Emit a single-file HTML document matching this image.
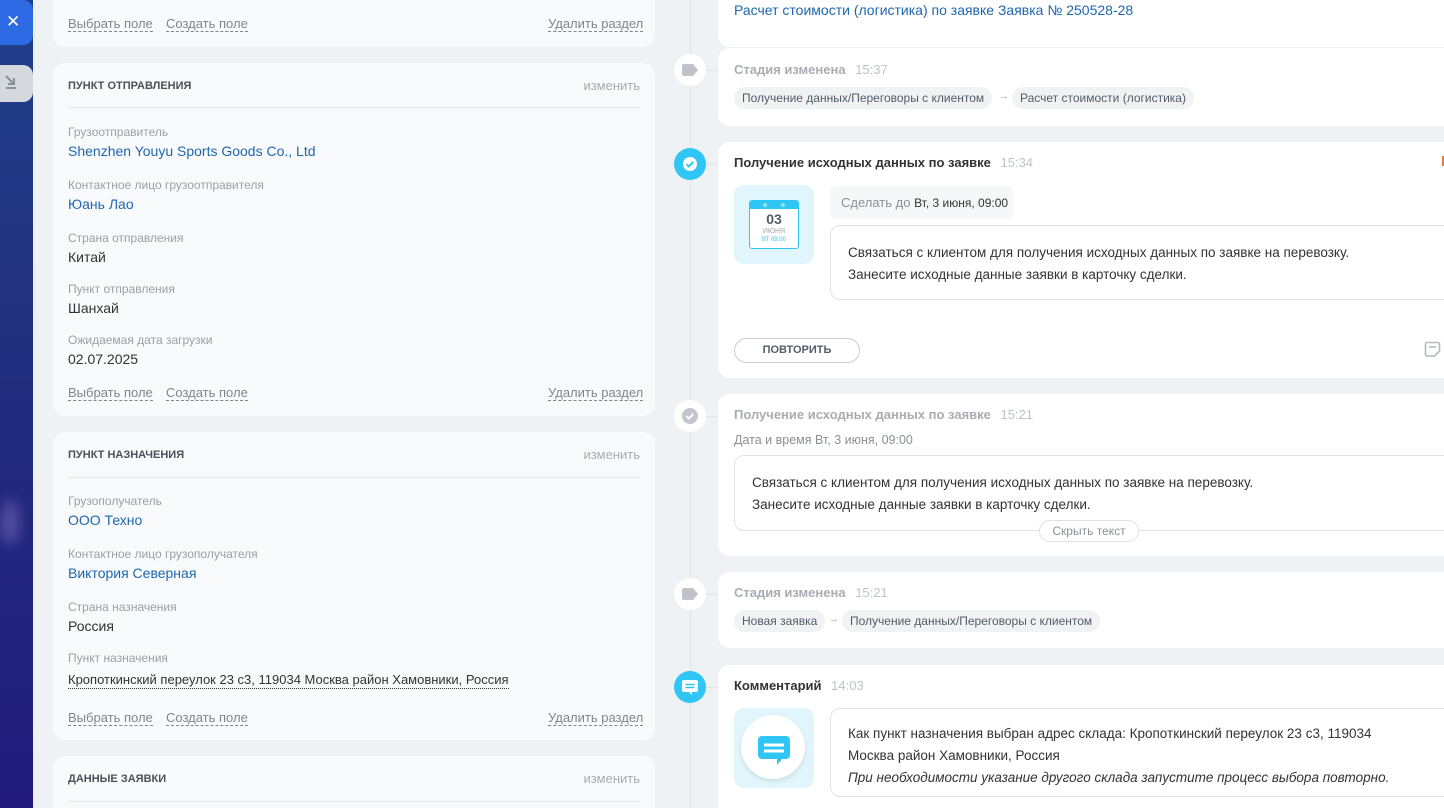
<!DOCTYPE html>
<html style="overflow:hidden;width:1444px;height:808px"><head><meta charset="utf-8"><style>
*{margin:0;padding:0;box-sizing:border-box}
body{width:1444px;height:808px;overflow:hidden;background:#eef2f4;font-family:"Liberation Sans",sans-serif;position:relative;color:#333}
.a{position:absolute;white-space:nowrap}
.side{position:absolute;left:0;top:0;width:33px;height:808px;background:linear-gradient(180deg,#1f3f8a 0%,#22307f 40%,#211a7c 100%)}
.lc{position:absolute;left:53px;width:602px;background:#f8fafb;border-radius:12px}
.rc{position:absolute;left:718px;width:726px;background:#fff;border-radius:12px 0 0 12px;overflow:hidden}
.lbl{font-size:12px;color:#9aa0a6}
.val{font-size:14px;color:#333}
.blue{color:#2067b0}
.ttl{font-size:11px;font-weight:bold;color:#4a5158;text-transform:uppercase}
.chg{font-size:13px;color:#a8adb2}
.hr{position:absolute;left:15px;right:15px;height:1px;background:#e3e6e9}
.lk{font-size:13px;color:#80868e;border-bottom:1px dashed #80868e;line-height:14px}
.dot{position:absolute;left:674px;width:32px;height:32px;border-radius:50%;background:#fff}
.dot.b{background:#2fc6f6}
.conn{position:absolute;left:706px;width:12px;height:1px;background:#dfe3e6}
.h{font-size:13px;font-weight:bold;color:#333}
.hg{font-size:13px;font-weight:bold;color:#a8adb2}
.tm{font-size:13px;color:#bfc3c7}
.pill{position:absolute;height:22px;line-height:22px;padding:0 8px;background:#f1f2f3;border-radius:11px;font-size:12px;color:#525c69}
.box{position:absolute;border:1px solid #dfe2e5;border-radius:10px;background:#fff}
.tx{font-size:13.5px;color:#333;line-height:22px}
</style></head><body>
<div class="side"></div>
<div class="a" style="left:0;top:0;width:33px;height:45px;background:#2f6ae5;border-radius:0 10px 10px 0"></div>
<div class="a" style="left:6px;top:12px;color:#fff;font-size:17px">✕</div>
<div class="a" style="left:0;top:65px;width:33px;height:37px;background:#d5d9dd;border-radius:0 10px 10px 0"></div>
<svg class="a" style="left:4px;top:74px" width="14" height="16" viewBox="0 0 14 16"><path d="M2 2l8 8M10 4v6H4M2 14h10" stroke="#8a9096" stroke-width="2" fill="none"/></svg>
<div class="a" style="left:0;top:500px;width:20px;height:45px;border-radius:50%;background:rgba(140,120,200,.45);filter:blur(6px)"></div>

<div class="a" style="left:690px;top:0;width:1px;height:808px;background:#dfe3e6"></div>

<div class="lc" style="top:-20px;height:67px">
 <span class="a lk" style="left:15px;top:37px">Выбрать поле</span>
 <span class="a lk" style="left:113px;top:37px">Создать поле</span>
 <span class="a lk" style="left:495px;top:37px">Удалить раздел</span>
</div>
<div class="lc" style="top:63px;height:353px">
 <div class="a ttl" style="left:15px;top:17px">Пункт отправления</div>
 <div class="a chg" style="right:15px;top:15px">изменить</div>
 <div class="hr" style="top:44px"></div>
 <div class="a lbl" style="left:15px;top:62px">Грузоотправитель</div>
 <div class="a val blue" style="left:15px;top:80px">Shenzhen Youyu Sports Goods Co., Ltd</div>
 <div class="a lbl" style="left:15px;top:115px">Контактное лицо грузоотправителя</div>
 <div class="a val blue" style="left:15px;top:133px">Юань Лао</div>
 <div class="a lbl" style="left:15px;top:168px">Страна отправления</div>
 <div class="a val" style="left:15px;top:186px">Китай</div>
 <div class="a lbl" style="left:15px;top:219px">Пункт отправления</div>
 <div class="a val" style="left:15px;top:237px">Шанхай</div>
 <div class="a lbl" style="left:15px;top:270px">Ожидаемая дата загрузки</div>
 <div class="a val" style="left:15px;top:288px">02.07.2025</div>
 <span class="a lk" style="left:15px;top:323px">Выбрать поле</span>
 <span class="a lk" style="left:113px;top:323px">Создать поле</span>
 <span class="a lk" style="left:495px;top:323px">Удалить раздел</span>
</div>
<div class="lc" style="top:432px;height:308px">
 <div class="a ttl" style="left:15px;top:17px">Пункт назначения</div>
 <div class="a chg" style="right:15px;top:15px">изменить</div>
 <div class="hr" style="top:45px"></div>
 <div class="a lbl" style="left:15px;top:62px">Грузополучатель</div>
 <div class="a val blue" style="left:15px;top:80px">ООО Техно</div>
 <div class="a lbl" style="left:15px;top:115px">Контактное лицо грузополучателя</div>
 <div class="a val blue" style="left:15px;top:133px">Виктория Северная</div>
 <div class="a lbl" style="left:15px;top:168px">Страна назначения</div>
 <div class="a val" style="left:15px;top:186px">Россия</div>
 <div class="a lbl" style="left:15px;top:219px">Пункт назначения</div>
 <div class="a" style="left:15px;top:240px;font-size:13px;color:#333;border-bottom:1px dotted #333;line-height:16px">Кропоткинский переулок 23 с3, 119034 Москва район Хамовники, Россия</div>
 <span class="a lk" style="left:15px;top:279px">Выбрать поле</span>
 <span class="a lk" style="left:113px;top:279px">Создать поле</span>
 <span class="a lk" style="left:495px;top:279px">Удалить раздел</span>
</div>
<div class="lc" style="top:756px;height:52px;border-radius:12px 12px 0 0">
 <div class="a ttl" style="left:15px;top:17px">Данные заявки</div>
 <div class="a chg" style="right:15px;top:15px">изменить</div>
 <div class="hr" style="top:45px"></div>
</div>

<div class="rc" style="top:-20px;height:67px">
 <div class="a blue" style="left:16px;top:22px;font-size:14px">Расчет стоимости (логистика) по заявке Заявка № 250528-28</div>
</div>

<div class="dot" style="top:54px"></div><div class="conn" style="top:70px"></div>
<svg class="a" style="left:682px;top:64px" width="17" height="12"><path d="M2 0h9l5 6-5 6H2a2 2 0 0 1-2-2V2a2 2 0 0 1 2-2z" fill="#bfc3c8"/></svg>
<div class="rc" style="top:48px;height:78px">
 <div class="a hg" style="left:16px;top:14px">Стадия изменена <span class="tm" style="font-weight:normal;margin-left:6px">15:37</span></div>
 <div class="pill" style="left:16px;top:39px">Получение данных/Переговоры с клиентом</div>
 <div class="a" style="left:280px;top:42px;font-size:11px;color:#aaa">→</div>
 <div class="pill" style="left:294px;top:39px">Расчет стоимости (логистика)</div>
</div>

<div class="dot b" style="top:148px"></div><div class="conn" style="top:164px"></div>
<svg class="a" style="left:682px;top:156px" width="16" height="16"><circle cx="8" cy="8" r="7" fill="#fff"/><path d="M4.5 8.3l2.3 2.2 4.5-4.5" stroke="#2fc6f6" stroke-width="2" fill="none"/></svg>
<div class="rc" style="top:142px;height:236px">
 <div class="a h" style="left:16px;top:13px">Получение исходных данных по заявке <span class="tm" style="font-weight:normal;margin-left:6px">15:34</span></div>
 <div class="a" style="left:16px;top:43px;width:80px;height:79px;background:#e0f6fc;border-radius:10px"></div>
 <div class="a" style="left:31px;top:58px;width:50px;height:49px;background:#fff;border:1px solid #2fc6f6;border-radius:3px;overflow:hidden">
  <div style="height:8px;background:#2fc6f6;position:relative"><span style="position:absolute;left:13px;top:2px;width:4px;height:4px;border-radius:50%;background:#8ee3fb"></span><span style="position:absolute;left:31px;top:2px;width:4px;height:4px;border-radius:50%;background:#8ee3fb"></span></div>
  <div style="text-align:center;font-size:14px;font-weight:bold;color:#535c69;line-height:16px;margin-top:2px">03</div>
  <div style="text-align:center;font-size:7px;color:#a0a6ac;line-height:9px">ИЮНЯ</div>
  <div style="text-align:center;font-size:6px;color:#2fc6f6;line-height:8px">ВТ 09:00</div>
 </div>
 <div class="a" style="left:112px;top:44px;width:183px;height:33px;background:#f5f7f8;border-radius:6px"></div>
 <div class="a" style="left:123px;top:53px;font-size:13px;color:#8a9096">Сделать до <span style="color:#333;font-size:12px">Вт, 3 июня, 09:00</span></div>
 <div class="box" style="left:112px;top:83px;width:640px;height:75px"></div>
 <div class="a tx" style="left:130px;top:100px">Связаться с клиентом для получения исходных данных по заявке на перевозку.<br>Занесите исходные данные заявки в карточку сделки.</div>
 <div class="a" style="left:16px;top:196px;width:126px;height:25px;border:1px solid #c9ccd0;border-radius:13px;text-align:center;line-height:23px;font-size:11px;font-weight:bold;color:#535c69">ПОВТОРИТЬ</div>
 <svg class="a" style="left:706px;top:199px" width="17" height="17"><path d="M3 1.5h11a1.5 1.5 0 0 1 1.5 1.5v7l-5 5H3A1.5 1.5 0 0 1 1.5 13.5V3A1.5 1.5 0 0 1 3 1.5z" fill="none" stroke="#b5b9bd" stroke-width="1.6"/><path d="M5 6h7" stroke="#b5b9bd" stroke-width="1.6"/></svg>
 <div class="a" style="left:724px;top:14px;width:4px;height:10px;background:#e87b3a"></div>
</div>

<div class="dot" style="top:400px"></div><div class="conn" style="top:416px"></div>
<svg class="a" style="left:682px;top:408px" width="16" height="16"><circle cx="8" cy="8" r="8" fill="#c2c6ca"/><path d="M4.5 8.3l2.3 2.2 4.5-4.5" stroke="#fff" stroke-width="2" fill="none"/></svg>
<div class="rc" style="top:394px;height:162px">
 <div class="a hg" style="left:16px;top:13px">Получение исходных данных по заявке <span class="tm" style="font-weight:normal;margin-left:6px">15:21</span></div>
 <div class="a" style="left:16px;top:39px;font-size:12.5px;color:#8a9096">Дата и время Вт, 3 июня, 09:00</div>
 <div class="box" style="left:16px;top:61px;width:740px;height:76px"></div>
 <div class="a tx" style="left:34px;top:78px">Связаться с клиентом для получения исходных данных по заявке на перевозку.<br>Занесите исходные данные заявки в карточку сделки.</div>
 <div class="a" style="left:321px;top:126px;width:100px;height:22px;border:1px solid #dfe2e5;border-radius:11px;background:#fff;text-align:center;line-height:20px;font-size:12px;color:#8a9096">Скрыть текст</div>
</div>

<div class="dot" style="top:578px"></div><div class="conn" style="top:594px"></div>
<svg class="a" style="left:682px;top:588px" width="17" height="12"><path d="M2 0h9l5 6-5 6H2a2 2 0 0 1-2-2V2a2 2 0 0 1 2-2z" fill="#bfc3c8"/></svg>
<div class="rc" style="top:572px;height:76px">
 <div class="a hg" style="left:16px;top:13px">Стадия изменена <span class="tm" style="font-weight:normal;margin-left:6px">15:21</span></div>
 <div class="pill" style="left:16px;top:38px">Новая заявка</div>
 <div class="a" style="left:110px;top:41px;font-size:11px;color:#aaa">→</div>
 <div class="pill" style="left:124px;top:38px">Получение данных/Переговоры с клиентом</div>
</div>

<div class="dot b" style="top:671px"></div><div class="conn" style="top:687px"></div>
<svg class="a" style="left:681px;top:679px" width="18" height="17"><rect x="1" y="1" width="16" height="12" rx="2" fill="#fff"/><path d="M11 12v4l-3-3" fill="#fff"/><path d="M4.5 5.5h9M4.5 8.5h9" stroke="#2fc6f6" stroke-width="1.6"/></svg>
<div class="rc" style="top:665px;height:143px;border-radius:12px 0 0 0">
 <div class="a h" style="left:16px;top:13px">Комментарий <span class="tm" style="font-weight:normal;margin-left:6px">14:03</span></div>
 <div class="a" style="left:16px;top:43px;width:80px;height:80px;background:#e0f6fc;border-radius:10px"></div>
 <div class="a" style="left:23px;top:50px;width:64px;height:64px;background:#fff;border-radius:50%;box-shadow:0 2px 5px rgba(0,0,0,.1)"></div>
 <svg class="a" style="left:40px;top:69px" width="32" height="32"><rect x="0" y="2" width="32" height="23" rx="4" fill="#2fc6f6"/><path d="M19 24v7l6-7z" fill="#2fc6f6"/><path d="M6 11h20M6 17h20" stroke="#fff" stroke-width="3"/></svg>
 <div class="box" style="left:112px;top:43px;width:640px;height:89px"></div>
 <div class="a tx" style="left:130px;top:58px">Как пункт назначения выбран адрес склада: Кропоткинский переулок 23 с3, 119034<br>Москва район Хамовники, Россия<br><i>При необходимости указание другого склада запустите процесс выбора повторно.</i></div>
</div>
</body></html>
